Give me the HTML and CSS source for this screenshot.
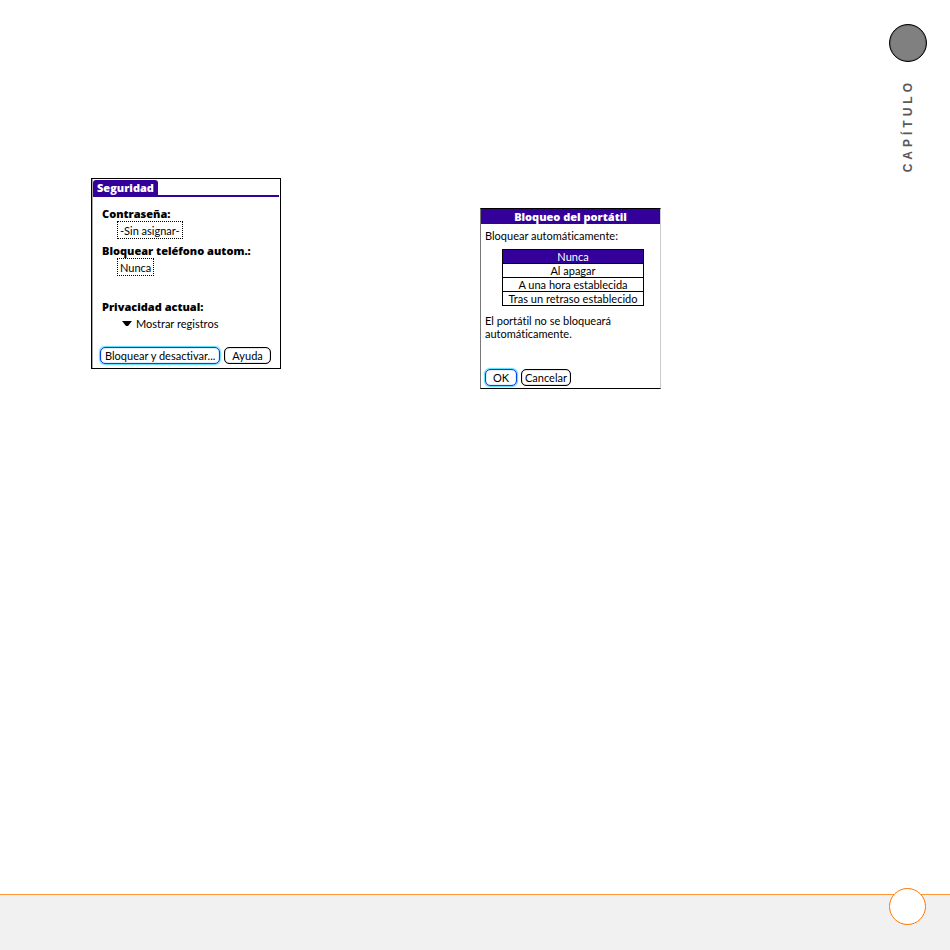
FILE: index.html
```html
<!DOCTYPE html>
<html lang="es">
<head>
    <meta charset="UTF-8">
    <meta name="viewport" content="width=device-width, initial-scale=1.0">
    <title>Seguridad</title>
    <link rel="stylesheet" href="styles.css">
</head>
<body>
    <div class="page">
        <main class="screens">
            <form class="screen security">
                <div class="tab-bar"><h2 class="tab">Seguridad</h2></div>
                <div class="security-body">
                    <label class="title" for="password">Contraseña:</label>
                    <button type="button" id="password" class="selector">-Sin asignar-</button>
                    <label class="title" for="auto-lock">Bloquear teléfono autom.:</label>
                    <button type="button" id="auto-lock" class="selector">Nunca</button>
                    <label class="title privacy-title" for="privacy">Privacidad actual:</label>
                    <div class="dropdown">
                        <svg class="arrow" width="10" height="5" viewBox="0 0 10 5"><path d="M0 0h10L6 5H4z"/></svg>
                        <select id="privacy">
                            <option>Mostrar registros</option>
                        </select>
                    </div>
                </div>
                <div class="buttons">
                    <button type="button" class="btn btn-default btn-wide">Bloquear y desactivar...</button>
                    <button type="button" class="btn">Ayuda</button>
                </div>
            </form>
            <form class="screen lock">
                <h2 class="title-bar">Bloqueo del portátil</h2>
                <div class="lock-body">
                    <p id="lock-label">Bloquear automáticamente:</p>
                    <div class="options" role="radiogroup" aria-labelledby="lock-label">
                        <label class="option"><input type="radio" name="lock" checked><span>Nunca</span></label>
                        <label class="option"><input type="radio" name="lock"><span>Al apagar</span></label>
                        <label class="option"><input type="radio" name="lock"><span>A una hora establecida</span></label>
                        <label class="option"><input type="radio" name="lock"><span>Tras un retraso establecido</span></label>
                    </div>
                    <p>El portátil no se bloqueará automáticamente.</p>
                </div>
                <div class="buttons">
                    <button type="button" class="btn btn-default">OK</button>
                    <button type="button" class="btn">Cancelar</button>
                </div>
            </form>
        </main>
        <aside class="chapter">
            <div class="chapter-circle"></div>
            <span class="chapter-label">CAPÍTULO</span>
        </aside>
    </div>
    <footer class="footer">
        <div class="page-circle"></div>
    </footer>
</body>
</html>
```

FILE: styles.css
```css
* {
    box-sizing: border-box;
}
body {
    margin: 0;
    min-height: 100vh;
    display: flex;
    flex-direction: column;
    background-color: #fff;
    color: #000;
    font-family: Lato, sans-serif;
    font-size: 11px;
    line-height: 13px;
    font-variant-ligatures: none;
}
h2, p {
    margin: 0;
}
button, select {
    font: inherit;
    font-variant-ligatures: none;
    color: inherit;
    background: none;
    cursor: pointer;
}
.page {
    flex: 1;
    display: flex;
}
.screens {
    flex: 1;
    display: grid;
    grid-template-columns: 1fr 1fr;
    column-gap: 3px;
    align-items: start;
    padding: 178px 0 0 91px;
}

/* Handheld screens */
.screen {
    display: flex;
    flex-direction: column;
    border: 1px solid #000;
}
.security {
    width: 190px;
    min-height: 191px;
    padding: 1px;
    box-shadow: inset 1px 0 #aaa;
}
.lock {
    width: 181px;
    min-height: 181px;
    margin-top: 30px;
    border-color: #000 #ccc #000 #777;
}
.tab, .title, .title-bar {
    font-family: "Open Sans", sans-serif;
    font-size: 11px;
    font-weight: 800;
}
.tab-bar {
    display: flex;
    border-bottom: 2px solid #309;
}
.tab {
    padding: 1px 4px;
    border-radius: 3px 3px 0 0;
    background-color: #309; /* Palm violet */
    color: #fff;
}
.title-bar {
    padding: 1px 0;
    background-color: #309;
    color: #fff;
    text-align: center;
}
.security-body {
    display: flex;
    flex-direction: column;
    align-items: flex-start;
    padding: 10px 9px 0;
}
.selector {
    height: 18px;
    margin: 1px 0 5px 15px;
    padding: 0 2px;
    border: 1px dotted #000;
    line-height: 15px;
}
.privacy-title {
    margin-top: 19px;
}
.dropdown {
    display: flex;
    align-items: center;
    gap: 4px;
    margin: 4px 0 0 20px;
}
.dropdown select {
    appearance: none;
    padding: 0;
    border: none;
}
.lock-body {
    padding: 5px 4px 0;
}
.options {
    width: 142px;
    margin: 7px 0 8px 17px;
    border: 1px solid #000;
}
.option {
    display: block;
    text-align: center;
}
.option + .option {
    border-top: 1px solid #000;
}
.option input {
    position: absolute;
    opacity: 0;
}
.option span {
    display: block;
}
.option input:checked + span {
    background-color: #309;
    color: #fff;
}
.buttons {
    display: flex;
    gap: 4px;
    margin-top: auto;
    padding: 0 4px 2px;
}
.security .buttons {
    padding: 0 7px 3px;
}
.btn {
    height: 17px;
    padding: 0 3px;
    border: 1px solid #000;
    border-radius: 5px;
    line-height: 15px;
    box-shadow: inset 0 0 1px #000;
}
.security .btn {
    padding: 0 7px;
}
.btn-default {
    min-width: 32px;
    border-color: #04e;
    box-shadow: inset 0 0 1px #04e, 0 0 1px 1px #5df;
}
.security .btn-wide {
    padding: 0 4px;
}

/* Chapter marker */
.chapter {
    width: 84px;
    display: flex;
    flex-direction: column;
    align-items: center;
    gap: 17px;
    padding-top: 24px;
}
.chapter-circle {
    width: 38px;
    height: 38px;
    border: 1px solid #000;
    border-radius: 50%;
    background-color: #808080;
    box-shadow: inset 0 0 1px #000;
}
.chapter-label {
    writing-mode: vertical-rl;
    transform: rotate(180deg);
    color: #58595b;
    font-family: "Liberation Sans", Arial, sans-serif;
    font-size: 12px;
    font-weight: bold;
    line-height: 14px;
    letter-spacing: 4px;
}

.footer {
    display: flex;
    justify-content: flex-end;
    height: 56px;
    padding-right: 24px;
    border-top: 1px solid #f93;
    background-color: #f1f1f1;
}
.page-circle {
    width: 37px;
    height: 37px;
    margin-top: -7px;
    border: 1px solid #f70;
    border-radius: 50%;
    background-color: #fff;
}
```
